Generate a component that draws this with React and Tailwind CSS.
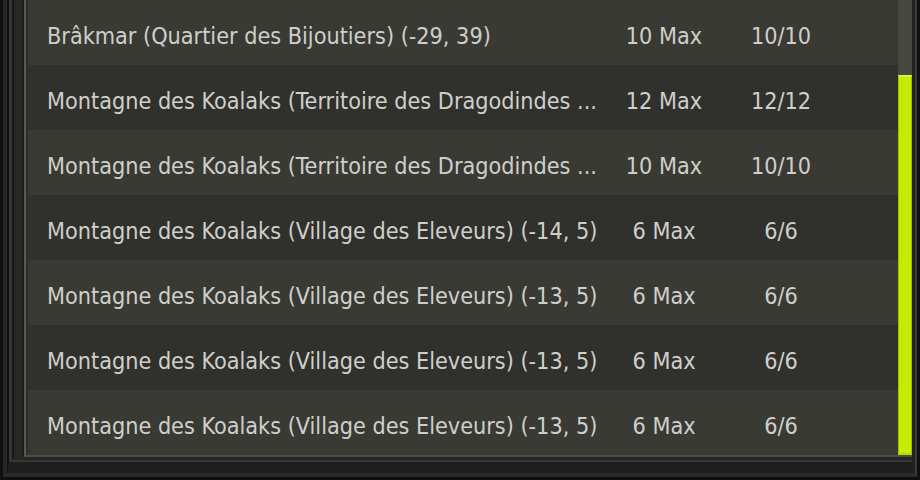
const rows = [
  { name: "Brâkmar (Quartier des Bijoutiers) (-29, 39)", max: "10 Max", count: "10/10" },
  { name: "Montagne des Koalaks (Territoire des Dragodindes ...", max: "12 Max", count: "12/12" },
  { name: "Montagne des Koalaks (Territoire des Dragodindes ...", max: "10 Max", count: "10/10" },
  { name: "Montagne des Koalaks (Village des Eleveurs) (-14, 5)", max: "6 Max", count: "6/6" },
  { name: "Montagne des Koalaks (Village des Eleveurs) (-13, 5)", max: "6 Max", count: "6/6" },
  { name: "Montagne des Koalaks (Village des Eleveurs) (-13, 5)", max: "6 Max", count: "6/6" },
  { name: "Montagne des Koalaks (Village des Eleveurs) (-13, 5)", max: "6 Max", count: "6/6" },
];

export default function App() {
  return (
    <div className="w-[920px] h-[480px] bg-[#0f0f0f] overflow-hidden font-['DejaVu_Sans_Condensed','DejaVu_Sans',sans-serif]">
      <div className="w-full h-full border-l-[3px] border-b-[3px] border-r-[3px] border-[#0f0f0f]">
        <div className="w-full h-full border-l-[4px] border-b-[4px] border-r-[2px] border-l-[#262626] border-b-[#2a2a2a] border-r-[#3a3a3a]">
          <div className="w-full h-full border-l-[2px] border-b-[11px] border-r-[3px] border-l-[#111111] border-b-[#1f1f1e] border-r-[#222221]">
            <div className="w-full h-full border-l-[3px] border-b-[2px] border-[#363636]">
              <div className="w-full h-full border-l-[2px] border-b-[3px] border-l-[#161616] border-b-[#262624]">
                <div className="w-full h-full border-l-[8px] border-[#282826]">
                  <div className="w-full h-full border-l-[2px] border-[#1e1e1c]">
                    <div className="w-full h-full border-l-[2px] border-b-[2px] border-l-[#5a5a55] border-b-[#4c4c47]">
                      <div className="w-full h-full border-l-[2px] border-[#2e2e2b] flex">
                        <div className="flex-1 flex flex-col">
                          {rows.map((r, i) => (
                            <div
                              key={i}
                              className={`h-[65px] flex pt-[7px] leading-[58px] text-[23.2px] text-[#cfcfc9] whitespace-nowrap ${
                                i % 2 === 0 ? "bg-[#3a3a35]" : "bg-[#30302c]"
                              }`}
                            >
                              <div className="w-[586px] pl-[19px] overflow-hidden">{r.name}</div>
                              <div className="w-[100px] text-center">{r.max}</div>
                              <div className="w-[134px] text-center">{r.count}</div>
                            </div>
                          ))}
                        </div>
                        <div className="w-[14px] flex flex-col bg-[#484843]">
                          <div className="h-[75px]" />
                          <div className="flex-1 bg-[#c6ea00] border-l border-r border-b-[2px] border-t-[2px] border-l-[#9fbe00] border-r-[#9fbe00] border-t-[#d9f53a] border-b-[#b5d800]" />
                        </div>
                      </div>
                    </div>
                  </div>
                </div>
              </div>
            </div>
          </div>
        </div>
      </div>
    </div>
  );
}
